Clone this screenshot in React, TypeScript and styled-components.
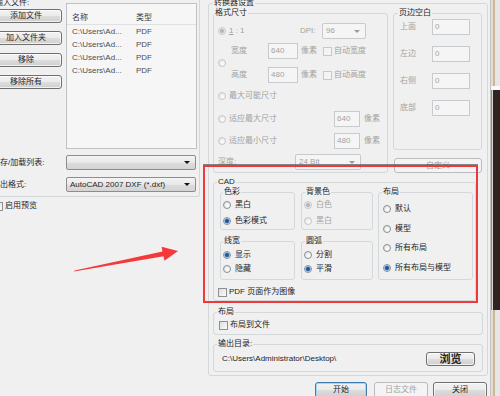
import React from "react";
import styled, { createGlobalStyle } from "styled-components";

const FONT = `"Liberation Sans", "Noto Sans CJK SC", sans-serif`;
const INK = "#1e1e1e";
const DIM = "#a3a3a3";
const LINE = "#d3d8db";

const GlobalStyle = createGlobalStyle`
  html, body { margin: 0; padding: 0; background: #f0f0f0; }
  *, *::before, *::after { box-sizing: border-box; }
`;

const Window = styled.div`
  position: relative;
  width: 500px;
  height: 396px;
  overflow: hidden;
  display: flex;
  background: #f0f0f0;
  font-family: ${FONT};
  font-size: 8px;
  line-height: 10px;
  color: ${INK};
`;

const Dialog = styled.div`
  width: 491px;
  flex: none;
  display: flex;
  flex-direction: column;
  border-right: 1px solid #c2c2c2;
`;

const Main = styled.div`
  display: flex;
  gap: 8px;
  align-items: flex-start;
`;

const Behind = styled.div`
  flex: 1;
  display: flex;
  flex-direction: column;
`;

const BehindPart = styled.div<{ $h: number; $bg: string }>`
  flex: none;
  height: ${(p) => p.$h}px;
  background: ${(p) => p.$bg};
`;

/* ---------- generic parts ---------- */

const Group = styled.fieldset<{ $w?: number; $mt?: number; $ml?: number }>`
  margin: ${(p) => p.$mt ?? 0}px 0 0 ${(p) => p.$ml ?? 0}px;
  padding: 0;
  min-width: 0;
  border: 1px solid ${LINE};
  border-radius: 3px;
  ${(p) => (p.$w ? `width: ${p.$w}px; flex: none;` : "")}
`;

const Legend = styled.legend<{ $x: number; $dim?: boolean }>`
  margin-left: ${(p) => p.$x}px;
  padding: 0 1px;
  height: 10px;
  line-height: 10px;
  font-size: 8px;
  white-space: nowrap;
  color: ${(p) => (p.$dim ? DIM : INK)};
`;

const Body = styled.div<{ $pl?: number; $pr?: number; $pb?: number }>`
  display: flex;
  flex-direction: column;
  padding: 0 ${(p) => p.$pr ?? 0}px ${(p) => p.$pb ?? 0}px ${(p) => p.$pl ?? 0}px;
`;

const Line = styled.div<{ $h?: number; $mt?: number; $ml?: number }>`
  display: flex;
  align-items: center;
  flex: none;
  height: ${(p) => p.$h ?? 16}px;
  margin-top: ${(p) => p.$mt ?? 0}px;
  margin-left: ${(p) => p.$ml ?? 0}px;
  white-space: nowrap;
`;

const Label = styled.span<{ $w?: number; $ml?: number; $dim?: boolean }>`
  flex: none;
  ${(p) => (p.$w ? `width: ${p.$w}px;` : "")}
  margin-left: ${(p) => p.$ml ?? 0}px;
  color: ${(p) => (p.$dim ? DIM : "inherit")};
  white-space: nowrap;
`;

const U = styled.span`
  text-decoration: underline;
`;

const Spacer = styled.div`
  flex: 1;
`;

const Radio = styled.span<{ $on?: boolean; $dim?: boolean }>`
  flex: none;
  width: 8px;
  height: 8px;
  border-radius: 50%;
  border: 1px solid ${(p) => (p.$dim ? "#c6c8ca" : "#8a9096")};
  background: ${(p) =>
    p.$on
      ? `radial-gradient(circle, ${p.$dim ? "#b4b4b4" : "#1d58a0"} 0 1.5px, ${
          p.$dim ? "#dedede" : "#6fa6dc"
        } 2.3px, #f6f6f6 3.1px)`
      : `radial-gradient(circle at 65% 65%, #ffffff 0, #ececec 55%, #d4d4d4 100%)`};
`;

const Check = styled.span<{ $dim?: boolean }>`
  flex: none;
  width: 9px;
  height: 9px;
  border: 1px solid ${(p) => (p.$dim ? "#c6c8ca" : "#8f8f8f")};
  background: ${(p) =>
    p.$dim ? "#f4f4f4" : "linear-gradient(135deg, #dedede, #fbfbfb)"};
`;

const Field = styled.div<{ $w: number; $ml?: number }>`
  flex: none;
  width: ${(p) => p.$w}px;
  height: 16px;
  margin-left: ${(p) => p.$ml ?? 0}px;
  border: 1px solid #c8cbce;
  background: #f5f5f5;
  color: ${DIM};
  display: flex;
  align-items: center;
  padding-left: 2px;
`;

const Combo = styled.div<{ $w: number; $h?: number; $dim?: boolean }>`
  flex: none;
  width: ${(p) => p.$w}px;
  height: ${(p) => p.$h ?? 16}px;
  display: flex;
  align-items: center;
  justify-content: space-between;
  padding: 0 5px 0 3px;
  border: 1px solid ${(p) => (p.$dim ? "#c8cbce" : "#8d8d8d")};
  border-radius: 2px;
  background: ${(p) =>
    p.$dim
      ? "#f5f5f5"
      : "linear-gradient(#f4f4f4, #e8e8e8 50%, #dcdcdc 51%, #d4d4d4)"};
  color: ${(p) => (p.$dim ? DIM : INK)};
`;

const Caret = styled.span<{ $dim?: boolean }>`
  width: 0;
  height: 0;
  border-left: 3px solid transparent;
  border-right: 3px solid transparent;
  border-top: 3px solid ${(p) => (p.$dim ? "#9c9c9c" : "#111")};
`;

const PushButton = styled.button<{
  $w: number;
  $h?: number;
  $ml?: number;
  $mt?: number;
  $dim?: boolean;
  $primary?: boolean;
  $big?: boolean;
}>`
  flex: none;
  width: ${(p) => p.$w}px;
  height: ${(p) => p.$h ?? 14}px;
  margin: ${(p) => p.$mt ?? 0}px 0 0 ${(p) => p.$ml ?? 0}px;
  padding: 0;
  font-family: ${FONT};
  font-size: ${(p) => (p.$big ? 11 : 8)}px;
  font-weight: ${(p) => (p.$big ? 700 : 400)};
  line-height: 1;
  color: ${(p) => (p.$dim ? DIM : INK)};
  border: 1px solid
    ${(p) => (p.$dim ? "#b8bcbf" : p.$primary ? "#3d7bad" : "#707070")};
  border-radius: 3px;
  background: ${(p) =>
    p.$dim
      ? "#f4f4f4"
      : "linear-gradient(#f2f2f2 0%, #ebebeb 49%, #dddddd 50%, #cfcfcf 100%)"};
  box-shadow: inset 0 0 0 1px
    ${(p) =>
      p.$dim ? "transparent" : p.$primary ? "#a7d6f6" : "rgba(255,255,255,0.7)"};
`;

/* ---------- left pane ---------- */

const LeftPane = styled.div`
  flex: none;
  width: 212px;
  margin-left: -12px;
  display: flex;
  flex-direction: column;
`;

const LeftGroup = styled.div`
  height: 197px;
  padding-bottom: 4px;
  border-right: 1px solid ${LINE};
  border-bottom: 1px solid ${LINE};
  border-bottom-right-radius: 3px;
  display: flex;
  flex-direction: column;
`;

const TopRow = styled.div`
  display: flex;
  align-items: flex-start;
`;

const ButtonCol = styled.div`
  flex: none;
  width: 74px;
  padding-left: 2px;
  display: flex;
  flex-direction: column;
`;

const GroupLabel = styled.div`
  height: 9px;
  line-height: 6px;
  padding-left: 5px;
  white-space: nowrap;
`;

const ListBox = styled.div`
  flex: none;
  width: 131px;
  height: 146px;
  margin: 3px 0 0 4px;
  border: 1px solid #bfc2c5;
  background: #f6f6f6;
  display: flex;
  flex-direction: column;
`;

const ListHead = styled.div`
  display: flex;
  align-items: center;
  height: 14px;
  margin-top: 7px;
  padding-left: 5px;
  border-bottom: 1px solid #e0e0e0;
  color: #3a3a3a;
`;

const ListRow = styled.div`
  display: flex;
  align-items: center;
  height: 13px;
  padding-left: 5px;
  color: #4e4e4e;
`;

const Cell = styled.span<{ $w?: number }>`
  flex: none;
  ${(p) => (p.$w ? `width: ${p.$w}px;` : "")}
  white-space: nowrap;
`;

/* ---------- right pane ---------- */

const RightPane = styled.fieldset`
  flex: none;
  width: 280px;
  margin: -2px 0 0 0;
  padding: 0;
  min-width: 0;
  border: 1px solid ${LINE};
  border-radius: 3px;
`;

const TopSettings = styled.div`
  display: flex;
  align-items: flex-start;
  gap: 5px;
`;

const SizeBlock = styled.div`
  display: flex;
  align-items: center;
  margin-top: 4px;
`;

const SizeRows = styled.div`
  display: flex;
  flex-direction: column;
  gap: 8px;
  margin-left: 5px;
`;

const MarginCol = styled.div`
  flex: none;
  width: 89px;
  display: flex;
  flex-direction: column;
`;

const CadRow = styled.div`
  display: flex;
  align-items: stretch;
`;

const CadCol = styled.div<{ $w: number; $ml?: number }>`
  flex: none;
  width: ${(p) => p.$w}px;
  margin-left: ${(p) => p.$ml ?? 0}px;
  display: flex;
  flex-direction: column;
  gap: 6px;
`;

const ButtonBar = styled.div`
  display: flex;
  justify-content: flex-end;
  margin-top: 6px;
  padding-right: 3px;
`;

/* ---------- overlays ---------- */

const Highlight = styled.div`
  position: absolute;
  left: 203px;
  top: 165px;
  width: 275px;
  height: 138px;
  border: 2px solid #f0373a;
  box-shadow: 0 -1px 0 rgba(60, 60, 60, 0.6);
  pointer-events: none;
`;

const ArrowSvg = styled.svg`
  position: absolute;
  left: 70px;
  top: 240px;
  width: 112px;
  height: 36px;
  pointer-events: none;
`;

function Opt(props: {
  on?: boolean;
  dim?: boolean;
  mt?: number;
  children: React.ReactNode;
}) {
  return (
    <Line $h={12} $mt={props.mt}>
      <Radio $on={props.on} $dim={props.dim} />
      <Label $ml={4} $dim={props.dim}>
        {props.children}
      </Label>
    </Line>
  );
}

const files = [0, 1, 2, 3];

export default function App() {
  return (
    <>
      <GlobalStyle />
      <Window>
        <Dialog>
          <Main>
            <LeftPane>
              <LeftGroup>
                <TopRow>
                  <ButtonCol>
                    <GroupLabel>输入文件:</GroupLabel>
                    <PushButton $w={72}>添加文件</PushButton>
                    <PushButton $w={72} $mt={8}>
                      加入文件夹
                    </PushButton>
                    <PushButton $w={72} $mt={8}>
                      移除
                    </PushButton>
                    <PushButton $w={72} $mt={8}>
                      移除所有
                    </PushButton>
                  </ButtonCol>
                  <ListBox>
                    <ListHead>
                      <Cell $w={64}>名称</Cell>
                      <Cell>类型</Cell>
                    </ListHead>
                    {files.map((i) => (
                      <ListRow key={i}>
                        <Cell $w={64}>{"C:\\Users\\Ad..."}</Cell>
                        <Cell>PDF</Cell>
                      </ListRow>
                    ))}
                  </ListBox>
                </TopRow>
                <Line $h={15} $mt={6}>
                  <Label $ml={4} $w={74}>
                    保存/加载列表:
                  </Label>
                  <Combo $w={130} $h={15}>
                    <span />
                    <Caret />
                  </Combo>
                </Line>
                <Line $h={15} $mt={7}>
                  <Label $ml={4} $w={74}>
                    输出格式:
                  </Label>
                  <Combo $w={130} $h={15}>
                    <span>AutoCAD 2007 DXF (*.dxf)</span>
                    <Caret />
                  </Combo>
                </Line>
              </LeftGroup>
              <Line $h={10} $mt={4} $ml={6}>
                <Check />
                <Label $ml={2}>启用预览</Label>
              </Line>
            </LeftPane>

            <RightPane>
              <Legend $x={4}>转换器设置</Legend>
              <Body $pl={4} $pr={4} $pb={3}>
                <TopSettings>
                  <Group $w={175}>
                    <Legend $x={0}>格式尺寸</Legend>
                    <Body $pl={4} $pb={2}>
                      <Line $mt={5}>
                        <Radio $on $dim />
                        <Label $ml={3} $w={71} $dim>
                          <U>1</U> : 1
                        </Label>
                        <Label $w={22} $dim>
                          DPI:
                        </Label>
                        <Combo $w={44} $dim>
                          <span>96</span>
                          <Caret $dim />
                        </Combo>
                      </Line>
                      <SizeBlock>
                        <Radio $dim />
                        <SizeRows>
                          <Line>
                            <Label $w={37} $dim>
                              宽度
                            </Label>
                            <Field $w={30}>640</Field>
                            <Label $ml={3} $w={22} $dim>
                              像素
                            </Label>
                            <Check $dim />
                            <Label $ml={2} $dim>
                              自动宽度
                            </Label>
                          </Line>
                          <Line>
                            <Label $w={37} $dim>
                              高度
                            </Label>
                            <Field $w={30}>480</Field>
                            <Label $ml={3} $w={22} $dim>
                              像素
                            </Label>
                            <Check $dim />
                            <Label $ml={2} $dim>
                              自动高度
                            </Label>
                          </Line>
                        </SizeRows>
                      </SizeBlock>
                      <Line $mt={5}>
                        <Radio $dim />
                        <Label $ml={3} $dim>
                          最大可能尺寸
                        </Label>
                      </Line>
                      <Line $mt={7}>
                        <Radio $dim />
                        <Label $ml={3} $w={105} $dim>
                          适应最大尺寸
                        </Label>
                        <Field $w={26}>640</Field>
                        <Label $ml={4} $dim>
                          像素
                        </Label>
                      </Line>
                      <Line $mt={6}>
                        <Radio $dim />
                        <Label $ml={3} $w={105} $dim>
                          适应最小尺寸
                        </Label>
                        <Field $w={26}>480</Field>
                        <Label $ml={4} $dim>
                          像素
                        </Label>
                      </Line>
                      <Line $mt={5}>
                        <Label $w={77} $dim>
                          深度:
                        </Label>
                        <Combo $w={66} $dim>
                          <span>24 Bit</span>
                          <Caret $dim />
                        </Combo>
                      </Line>
                    </Body>
                  </Group>

                  <MarginCol>
                    <Group>
                      <Legend $x={4}>页边空白</Legend>
                      <Body $pl={6} $pb={33}>
                        <Line $mt={1}>
                          <Label $w={32} $dim>
                            上面
                          </Label>
                          <Field $w={38}>0</Field>
                        </Line>
                        <Line $mt={11}>
                          <Label $w={32} $dim>
                            左边
                          </Label>
                          <Field $w={38}>0</Field>
                        </Line>
                        <Line $mt={11}>
                          <Label $w={32} $dim>
                            右侧
                          </Label>
                          <Field $w={38}>0</Field>
                        </Line>
                        <Line $mt={11}>
                          <Label $w={32} $dim>
                            底部
                          </Label>
                          <Field $w={38}>0</Field>
                        </Line>
                      </Body>
                    </Group>
                    <PushButton $w={88} $h={15} $ml={1} $mt={8} $dim>
                      自定义
                    </PushButton>
                  </MarginCol>
                </TopSettings>

                <Group $w={263} $mt={4}>
                  <Legend $x={3}>CAD</Legend>
                  <Body $pl={6} $pb={3}>
                    <CadRow>
                      <CadCol $w={75}>
                        <Group>
                          <Legend $x={2}>色彩</Legend>
                          <Body $pl={2} $pb={2}>
                            <Opt mt={2}>黑白</Opt>
                            <Opt mt={4} on>
                              色彩模式
                            </Opt>
                          </Body>
                        </Group>
                        <Group>
                          <Legend $x={2}>线宽</Legend>
                          <Body $pl={2} $pb={4}>
                            <Opt mt={3} on>
                              显示
                            </Opt>
                            <Opt mt={2}>隐藏</Opt>
                          </Body>
                        </Group>
                      </CadCol>
                      <CadCol $w={72} $ml={6}>
                        <Group>
                          <Legend $x={3}>背景色</Legend>
                          <Body $pl={2} $pb={2}>
                            <Opt mt={2} on dim>
                              白色
                            </Opt>
                            <Opt mt={4} dim>
                              黑白
                            </Opt>
                          </Body>
                        </Group>
                        <Group>
                          <Legend $x={3}>圆弧</Legend>
                          <Body $pl={2} $pb={4}>
                            <Opt mt={3}>分割</Opt>
                            <Opt mt={2} on>
                              平滑
                            </Opt>
                          </Body>
                        </Group>
                      </CadCol>
                      <Group $w={95} $ml={5}>
                        <Legend $x={3}>布局</Legend>
                        <Body $pl={4}>
                          <Opt mt={6}>默认</Opt>
                          <Opt mt={7.5}>模型</Opt>
                          <Opt mt={7.5}>所有布局</Opt>
                          <Opt mt={7.5} on>
                            所有布局与模型
                          </Opt>
                        </Body>
                      </Group>
                    </CadRow>
                    <Line $h={10} $mt={7} $ml={-2}>
                      <Check />
                      <Label $ml={2}>PDF 页面作为图像</Label>
                    </Line>
                  </Body>
                </Group>

                <Group $mt={6}>
                  <Legend $x={3}>布局</Legend>
                  <Body $pl={5} $pb={4}>
                    <Line $h={10} $mt={3}>
                      <Check />
                      <Label $ml={2}>布局到文件</Label>
                    </Line>
                  </Body>
                </Group>

                <Group $mt={4}>
                  <Legend $x={3}>输出目录:</Legend>
                  <Body $pl={8} $pr={7} $pb={4}>
                    <Line $mt={2}>
                      <Label>{"C:\\Users\\Administrator\\Desktop\\"}</Label>
                      <Spacer />
                      <PushButton $w={49} $big>
                        浏览
                      </PushButton>
                    </Line>
                  </Body>
                </Group>
              </Body>
            </RightPane>
          </Main>

          <ButtonBar>
            <PushButton $w={52} $h={16} $primary>
              开始
            </PushButton>
            <PushButton $w={54} $h={16} $ml={7} $dim>
              日志文件
            </PushButton>
            <PushButton $w={54} $h={16} $ml={5}>
              关闭
            </PushButton>
          </ButtonBar>
        </Dialog>

        <Behind>
          <BehindPart
            $h={86}
            $bg="linear-gradient(to right, #e4dccf 0 2px, #cbb79a 2px 4px, #e6e6e6 4px)"
          />
          <BehindPart $h={4} $bg="#fafafa" />
          <BehindPart
            $h={220}
            $bg="linear-gradient(to right, #8c8c8c 0 1px, #d8d8d8 1px 2px, #2f2520 2px)"
          />
          <BehindPart
            $h={86}
            $bg="linear-gradient(to right, #e4dccf 0 2px, #cbb79a 2px 4px, #e6e6e6 4px)"
          />
        </Behind>

        <Highlight />
        <ArrowSvg viewBox="70 240 112 36">
          <polygon
            points="74,271.6 74.6,270.6 162.5,251.4 161.6,246.8 178,251 164.4,260.8 163.6,256.3"
            fill="#f5393b"
          />
        </ArrowSvg>
      </Window>
    </>
  );
}
